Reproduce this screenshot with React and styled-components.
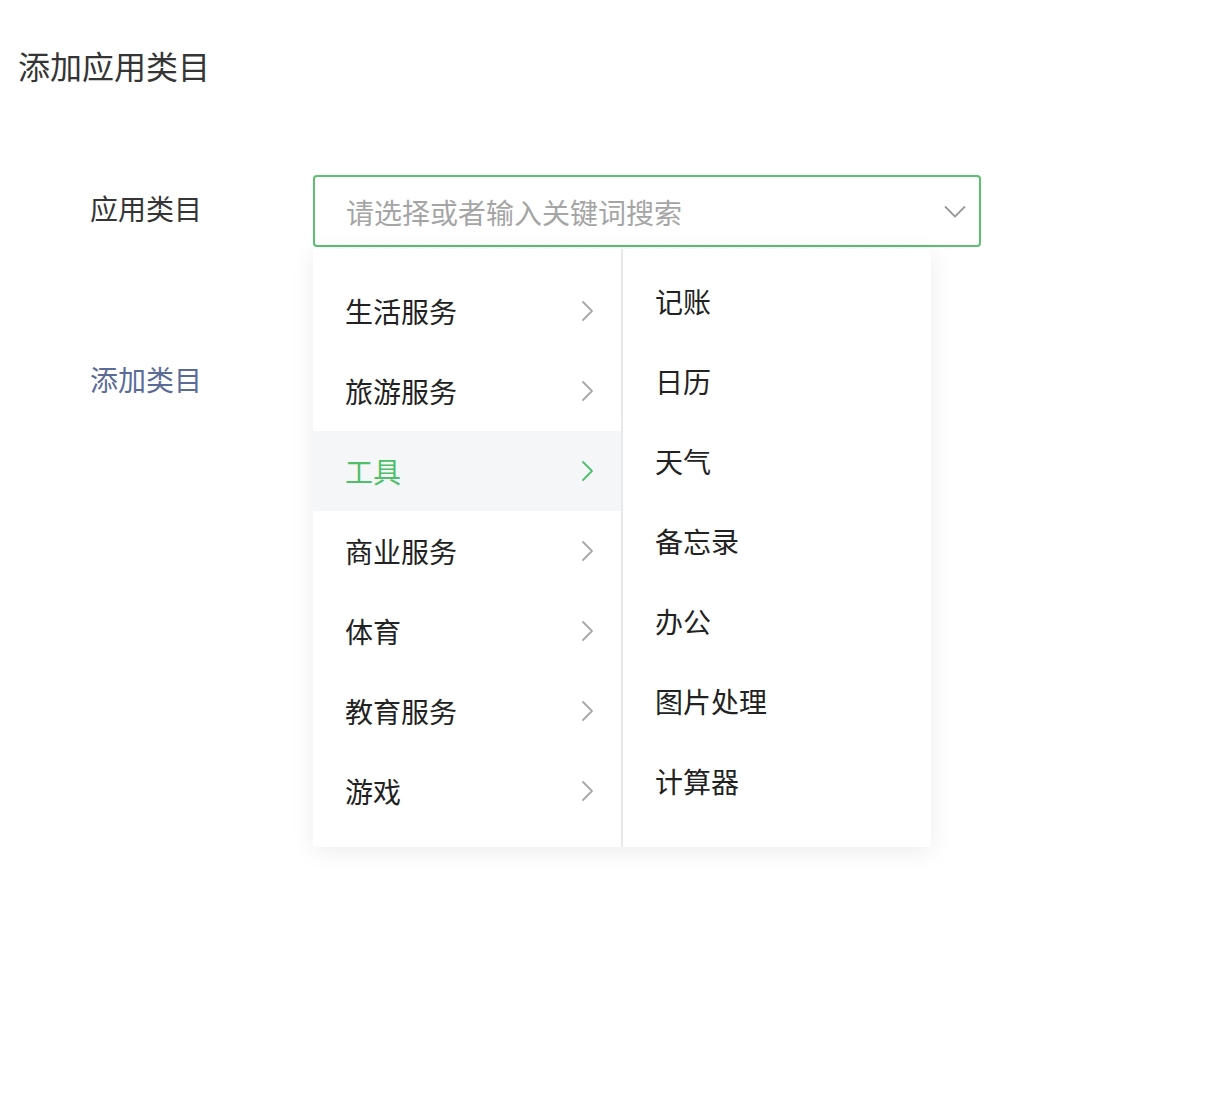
import React, { useState } from 'react';
import styled, { createGlobalStyle } from 'styled-components';

const GlobalStyle = createGlobalStyle`
  html, body {
    margin: 0;
    padding: 0;
    background: #ffffff;
    font-family: "Noto Sans CJK SC", "Noto Sans", "Liberation Sans", sans-serif;
  }
`;

const categories = [
  { name: '生活服务' },
  { name: '旅游服务' },
  { name: '工具' },
  { name: '商业服务' },
  { name: '体育' },
  { name: '教育服务' },
  { name: '游戏' },
];

const tools = ['记账', '日历', '天气', '备忘录', '办公', '图片处理', '计算器'];

const ChevronRight = ({ color }) => (
  <svg width="14" height="22" viewBox="0 0 14 22" fill="none">
    <path d="M2 2 L11 11 L2 20" stroke={color} strokeWidth="1.8" strokeLinecap="round" strokeLinejoin="round" />
  </svg>
);

const ChevronDown = () => (
  <svg width="22" height="14" viewBox="0 0 22 14" fill="none">
    <path d="M1.5 2 L11 11.5 L20.5 2" stroke="#9a9a9a" strokeWidth="1.8" strokeLinecap="round" strokeLinejoin="round" />
  </svg>
);

export default function App() {
  const [active, setActive] = useState(2);

  return (
    <Page>
      <GlobalStyle />
      <Title>添加应用类目</Title>
      <Form>
        <Row>
          <Label>应用类目</Label>
          <Field>
            <Select>
              <Placeholder>请选择或者输入关键词搜索</Placeholder>
              <ChevronDown />
            </Select>
            <Dropdown>
              <Column>
                {categories.map((c, i) => (
                  <Item key={c.name} active={i === active} onClick={() => setActive(i)}>
                    <span>{c.name}</span>
                    <ChevronRight color={i === active ? '#4fbf6a' : '#a8a8a8'} />
                  </Item>
                ))}
              </Column>
              <Divider />
              <SubColumn>
                {tools.map(t => (
                  <SubItem key={t}>{t}</SubItem>
                ))}
              </SubColumn>
            </Dropdown>
          </Field>
        </Row>
        <AddLink>添加类目</AddLink>
      </Form>
    </Page>
  );
}

const Page = styled.div`
  width: 1224px;
  min-height: 1100px;
  padding: 41px 0 0 18px;
  box-sizing: border-box;
`;

const Title = styled.h1`
  margin: 0;
  font-size: 32px;
  font-weight: 400;
  line-height: 48px;
  color: #353535;
`;

const Form = styled.div`
  margin-top: 86px;
  padding-left: 72px;
`;

const Row = styled.div`
  display: flex;
  align-items: flex-start;
`;

const Label = styled.div`
  width: 223px;
  font-size: 28px;
  line-height: 66px;
  color: #353535;
`;

const Field = styled.div`
  position: relative;
  width: 668px;
`;

const Select = styled.div`
  height: 72px;
  box-sizing: border-box;
  border: 2px solid #5bc06f;
  border-radius: 4px;
  display: flex;
  align-items: center;
  justify-content: space-between;
  padding: 2px 13px 0 31px;
`;

const Placeholder = styled.span`
  font-size: 28px;
  color: #a5a5a5;
`;

const Dropdown = styled.div`
  position: absolute;
  top: 74px;
  left: 0;
  width: 618px;
  height: 598px;
  display: flex;
  background: #fff;
  border-radius: 4px;
  box-shadow: 0 4px 24px rgba(0, 0, 0, 0.08);
  overflow: hidden;
  z-index: 2;
`;

const Column = styled.div`
  width: 308px;
  padding: 22px 0 16px;
  box-sizing: border-box;
`;

const Divider = styled.div`
  width: 2px;
  background: #e6e8ec;
`;

const SubColumn = styled.div`
  flex: 1;
  padding: 12px 0 0 32px;
`;

const Item = styled.div`
  height: 80px;
  display: flex;
  align-items: center;
  justify-content: space-between;
  padding: 0 26px 0 32px;
  font-size: 28px;
  color: ${p => (p.active ? '#4fbf6a' : '#222')};
  background: ${p => (p.active ? '#f5f6f8' : 'transparent')};
  cursor: pointer;
`;

const SubItem = styled.div`
  height: 80px;
  display: flex;
  align-items: center;
  font-size: 28px;
  color: #222;
`;

const AddLink = styled.div`
  margin-top: 112px;
  font-size: 28px;
  line-height: 40px;
  color: #5a6b98;
`;
